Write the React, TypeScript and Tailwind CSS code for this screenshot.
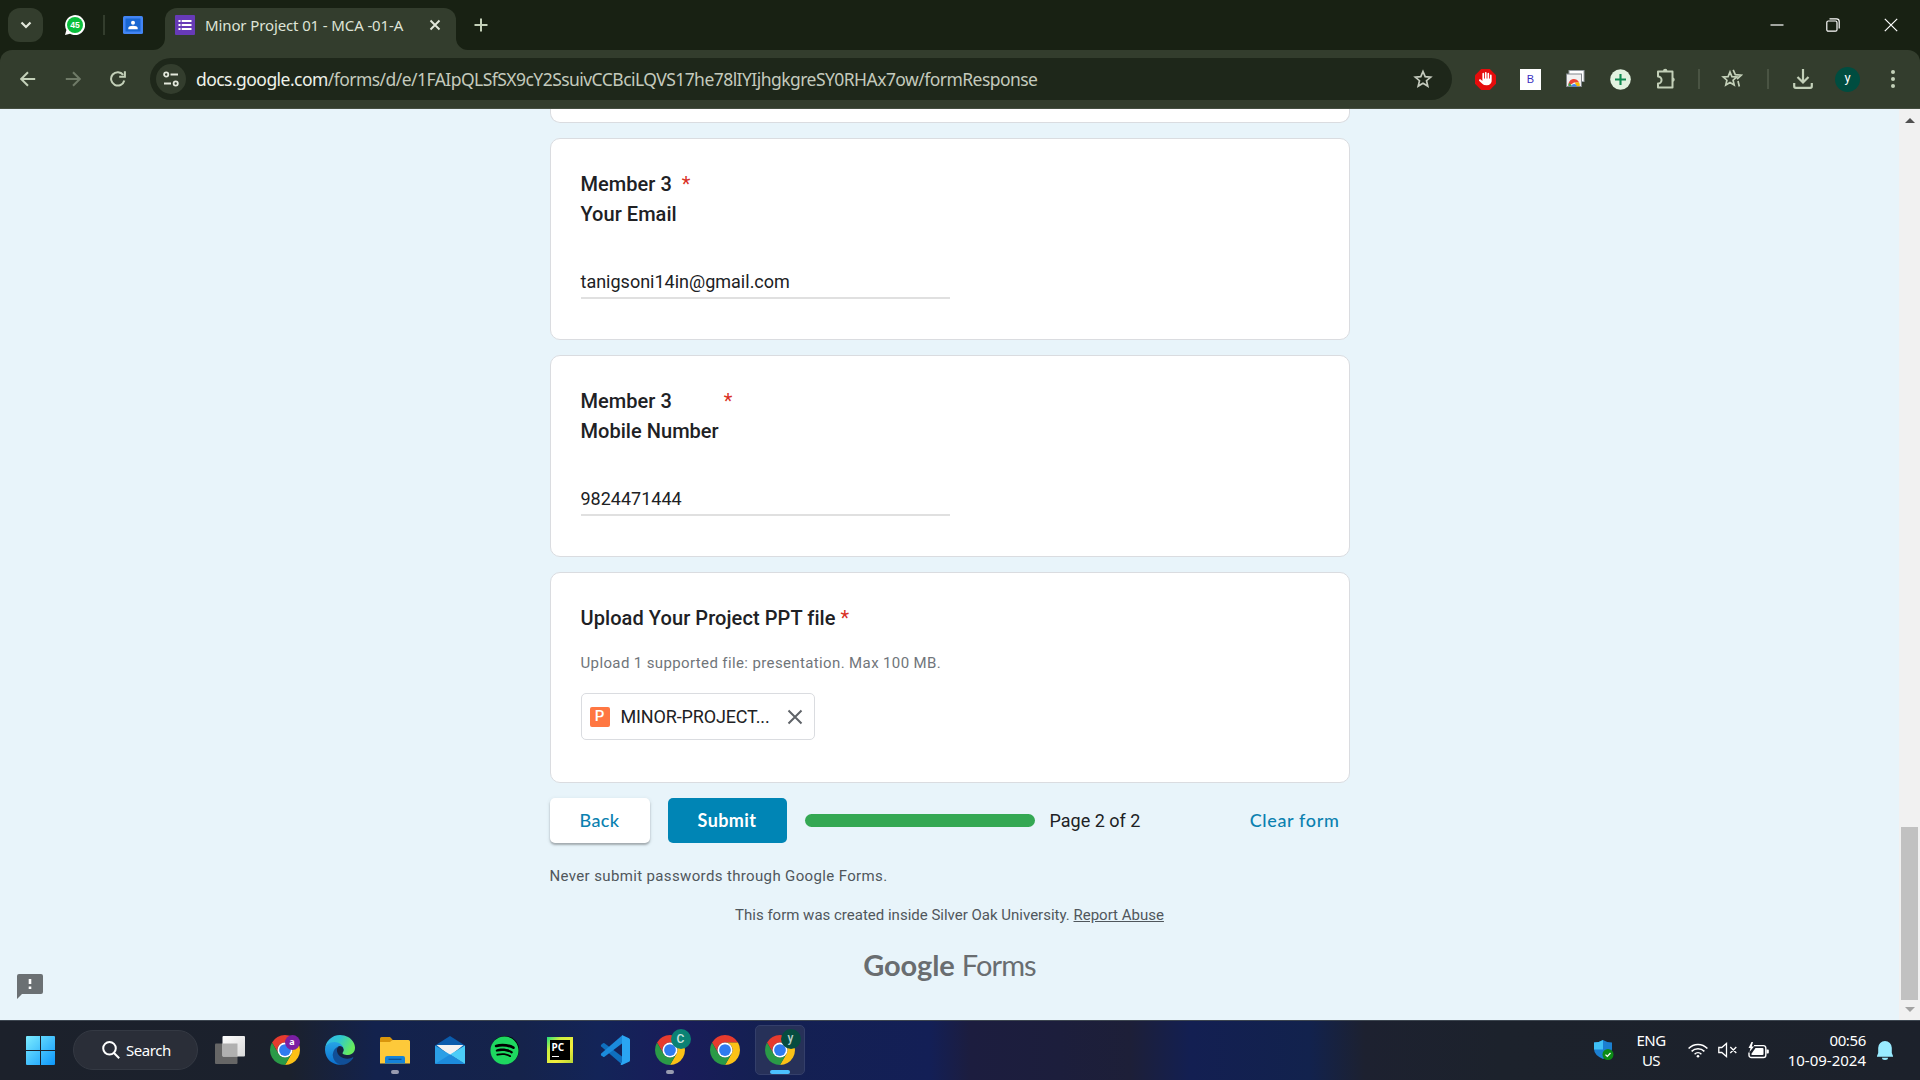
import React from "react";
import { FaSpotify, FaHand } from "react-icons/fa6";

const UI = "font-['Noto_Sans','Open_Sans',sans-serif]";

function ChromeLogo({ badge, badgeClass }: { badge?: string; badgeClass?: string }) {
  return (
    <div className="relative size-[30px]">
      <svg viewBox="0 0 48 48" className="size-[30px]">
        <path fill="#e63b2e" d="M24 12H44.78A24 24 0 0 0 3.22 12L13.61 30A12 12 0 0 1 24 12Z" />
        <path fill="#fbc116" d="M34.39 30L24 48A24 24 0 0 0 44.78 12H24A12 12 0 0 1 34.39 30Z" />
        <path fill="#2a9a47" d="M13.61 30L3.22 12A24 24 0 0 0 24 48L34.39 30A12 12 0 0 1 13.61 30Z" />
        <circle cx="24" cy="24" r="12" fill="#fff" />
        <circle cx="24" cy="24" r="9.4" fill="#2f7bf0" />
      </svg>
      {badge && <span className={badgeClass}>{badge}</span>}
    </div>
  );
}

function TabStrip() {
  return (
    <div className="flex h-[50px] w-full items-center bg-[#182113]">
      <div className="ml-2 flex h-[34px] w-[35px] items-center justify-center rounded-[12px] bg-[#333d2d]">
        <svg viewBox="0 0 12 8" className="h-[8px] w-[12px]" fill="none" stroke="#e3e8dc" strokeWidth="2.2">
          <path d="M1.5 1.5L6 6l4.5-4.5" />
        </svg>
      </div>
      <svg viewBox="0 0 20 20" className="ml-[22px] size-5">
        <path d="M0 20L1.4 15A10 10 0 1 1 5 18.7Z" fill="#fff" />
        <circle cx="10" cy="10" r="8" fill="#0abf3c" />
        <text x="10" y="13.2" fontSize="8.5" fontWeight="700" textAnchor="middle" fill="#fff" fontFamily="Liberation Sans">45</text>
      </svg>
      <div className="ml-[18px] h-5 w-[2px] bg-[#333d2d]" />
      <svg viewBox="0 0 20 18" className="ml-[18px] h-[18px] w-5">
        <rect width="20" height="18" rx="1.5" fill="#4285f4" />
        <rect x="2.5" y="2.5" width="15" height="13" fill="#1967d2" />
        <circle cx="10" cy="6.8" r="2" fill="#fff" />
        <path d="M5.3 13.3v-1.2c0-3.2 9.4-3.2 9.4 0v1.2z" fill="#fff" />
      </svg>
      <svg viewBox="0 0 12 12" className="ml-[10px] size-3 self-end" fill="#333d2d">
        <path d="M12 0A12 12 0 0 1 0 12H12Z" />
      </svg>
      <div className="flex h-[42px] w-[291px] items-center self-end rounded-t-[12px] bg-[#333d2d] pb-2">
        <svg viewBox="0 0 20 20" className="ml-[10px] size-5">
          <rect width="20" height="20" rx="1" fill="#673ab7" />
          <path fill="#fff" d="M3.5 5h2v2h-2zM6.7 5h9.8v2H6.700zM3.500 9h2v2h-2zM6.700 9h9.800v2H6.700zM3.500 13h2v2h-2zM6.700 13h9.800v2H6.700z" />
        </svg>
        <span className="ml-[10px] w-[214px] text-[15px] tracking-[-0.12px] whitespace-nowrap text-[#dfe4d7]">Minor Project 01 - MCA -01-A</span>
        <svg viewBox="0 0 12 12" className="ml-[10px] size-3" stroke="#e3e8dc" strokeWidth="1.9">
          <path d="M1.500 1.500l9 9M10.500 1.500l-9 9" />
        </svg>
      </div>
      <svg viewBox="0 0 12 12" className="size-3 self-end" fill="#333d2d">
        <path d="M0 0A12 12 0 0 0 12 12H0Z" />
      </svg>
      <svg viewBox="0 0 14 14" className="ml-[6px] size-[14px]" stroke="#c3d0b8" strokeWidth="2">
        <path d="M7 .5v13M.5 7h13" />
      </svg>
      <div className="ml-auto flex items-center">
        <svg viewBox="0 0 14 14" className="mr-[42px] size-[14px]" stroke="#fff" strokeWidth="1.200">
          <path d="M.5 7h13" />
        </svg>
        <svg viewBox="0 0 14 14" className="mr-[44px] size-[14px]" stroke="#fff" strokeWidth="1.200" fill="none">
          <rect x=".8" y="3" width="10.200" height="10.200" rx="1.500" />
          <path d="M3.500 .8h7a2.700 2.700 0 0 1 2.700 2.700v7" />
        </svg>
        <svg viewBox="0 0 14 14" className="mr-[22px] size-[14px]" stroke="#fff" strokeWidth="1.200">
          <path d="M.8 .8l12.400 12.400M13.200 .8L.8 13.200" />
        </svg>
      </div>
    </div>
  );
}

function Cell({ w, children }: { w: string; children: React.ReactNode }) {
  return <div className={`flex shrink-0 items-center justify-center ${w}`}>{children}</div>;
}

function Toolbar() {
  return (
    <div className="w-full bg-[#182113]">
      <div className="flex h-[59px] w-full items-center rounded-t-[12px] border-b border-[#454e40] bg-[#333d2d]">
        <div className="flex w-[150px] items-center">
          <svg viewBox="0 0 16 16" className="ml-5 size-4" stroke="#c3d0b8" strokeWidth="2" fill="none">
            <path d="M15.200 8H1.800M8 1.200L1.200 8L8 14.800" />
          </svg>
          <svg viewBox="0 0 16 16" className="ml-[29px] size-4" stroke="#6f7a67" strokeWidth="2" fill="none">
            <path d="M.8 8H14.200M8 1.200L14.800 8L8 14.800" />
          </svg>
          <svg viewBox="0 0 16 16" className="ml-[29px] size-4" fill="none" stroke="#c3d0b8" strokeWidth="2">
            <path d="M14.300 9.500A6.700 6.700 0 1 1 13.200 3.900" />
            <path d="M14.900 .3v5.500H9.200" />
          </svg>
        </div>
        <div className="flex h-[42px] w-[1302px] items-center rounded-full bg-[#1e271a]">
          <div className="ml-[6px] flex size-[30px] items-center justify-center rounded-full bg-[#333d2d]">
            <svg viewBox="0 0 16 16" className="size-4" fill="none" stroke="#e3e8dc" strokeWidth="1.800">
              <circle cx="3.200" cy="3.500" r="2.100" />
              <path d="M7.500 3.500H15M1 12.500h7" />
              <circle cx="12.700" cy="12.500" r="2.100" />
            </svg>
          </div>
          <span className="ml-[10px] text-[17.5px] tracking-[-0.545px] whitespace-nowrap text-[#c4cabd]">
            <span className="text-[#eef2ea]">docs.google.com</span>/forms/d/e/1FAIpQLSfSX9cY2SsuivCCBciLQVS17he78lIYIjhgkgreSY0RHAx7ow/formResponse
          </span>
          <svg viewBox="0 0 20 20" className="mr-[19px] ml-auto size-5" fill="none" stroke="#c4cabd" strokeWidth="1.700">
            <path d="M10 2.500l2.200 5.100 5.500.5-4.200 3.600 1.300 5.400L10 14.200l-4.800 2.900 1.300-5.400L2.300 8.100l5.500-.5z" />
          </svg>
        </div>
        <div className="ml-[11px] flex items-center">
          <Cell w="w-[45px]">
            <svg viewBox="0 0 21 21" className="size-[21px]">
              <path d="M6.200 0h8.600L21 6.200v8.600L14.800 21H6.200L0 14.800V6.200z" fill="#e50c0c" />
              <FaHand x="4" y="3" size={13.5} color="#fff" />
            </svg>
          </Cell>
          <Cell w="w-[45px]">
            <div className="flex size-[21px] items-center justify-center bg-white font-['Liberation_Sans',sans-serif] text-[11px] text-[#3a2fc0]">B</div>
          </Cell>
          <Cell w="w-[44px]">
            <svg viewBox="0 0 20 18" className="h-[18px] w-5">
              <rect x="4" y=".5" width="15" height="11" fill="#fff" stroke="#9aa0a6" />
              <rect x="1.500" y="4" width="15" height="12.500" fill="#f1f1f1" stroke="#80868b" />
              <path d="M3.500 16a5.600 5.600 0 0 1 10.600-3.500H9z" fill="#ea4335" />
              <path d="M3.500 16a5.600 5.600 0 0 1 .8-3.300L7 16z" fill="#34a853" />
              <path d="M14.100 12.500A5.600 5.600 0 0 1 14.700 16H11l-1-3.500z" fill="#fbbc04" />
              <path d="M6.500 16.500a2.600 2.600 0 0 1 5.200 0z" fill="#4285f4" />
            </svg>
          </Cell>
          <Cell w="w-[46px]">
            <svg viewBox="0 0 21 21" className="size-[21px]">
              <circle cx="10.500" cy="10.500" r="10.300" fill="#e2f2e0" />
              <path d="M10.500 5v11M5 10.500h11" stroke="#0e8a50" strokeWidth="2.100" />
            </svg>
          </Cell>
          <Cell w="w-[46px]">
            <svg viewBox="0 0 22 22" className="size-[22px]" fill="none" stroke="#c3d0b8" strokeWidth="2" strokeLinejoin="round">
              <path d="M3 3.500H17.500V19.500H3V15.600A3 3 0 0 0 3 8.500Z" />
              <path d="M8 3a2.200 2.200 0 0 1 4.400 0zM18 9.400a2.200 2.200 0 0 1 0 4.300z" fill="#c3d0b8" stroke="none" />
            </svg>
          </Cell>
          <Cell w="w-[20px]"><div className="h-5 w-[2px] bg-[#4a5443]" /></Cell>
          <Cell w="w-[45px]">
            <svg viewBox="0 0 22 20" className="h-5 w-[22px]" fill="none" stroke="#c3d0b8" strokeWidth="1.700">
              <path d="M9 3l1.900 4.600 4.900.4-3.700 3.200 1.100 4.800L9 13.500 4.800 16l1.100-4.800L2.200 8l4.900-.4z" />
              <path d="M12.200 .8l2.100 4.900 6 .5-4.300 3.800M17 12l1.300 5.500" />
            </svg>
          </Cell>
          <Cell w="w-[27px]"><div className="h-5 w-[2px] bg-[#4a5443]" /></Cell>
          <Cell w="w-[43px]">
            <svg viewBox="0 0 20 20" className="size-5" fill="none" stroke="#c3d0b8" strokeWidth="2.200">
              <path d="M10 0v13M4.500 8L10 13.500 15.500 8M1.200 14v3.300c0 .9.500 1.500 1.500 1.500h14.600c1 0 1.500-.6 1.500-1.500V14" />
            </svg>
          </Cell>
          <Cell w="w-[47px]">
            <div className="flex size-[25px] items-center justify-center rounded-full bg-[#004d40] pb-[3px] font-['Roboto',sans-serif] text-[13px] text-white">y</div>
          </Cell>
          <Cell w="w-[43px]">
            <svg viewBox="0 0 4 18" className="h-[18px] w-1" fill="#c3d0b8">
              <circle cx="2" cy="2" r="2" /><circle cx="2" cy="9" r="2" /><circle cx="2" cy="16" r="2" />
            </svg>
          </Cell>
        </div>
      </div>
    </div>
  );
}

function Question({ lines, value }: { lines: string[]; value: string }) {
  return (
    <section className="h-[202px] w-[800px] rounded-[10px] border border-[#dadce0] bg-white px-[30px] pt-[30px]">
      <div className="flex text-[20px] leading-[30px] text-[#202124]">
        <h2 className="font-medium tracking-[0.04px]">{lines.map((l) => <div key={l}>{l}</div>)}</h2>
        <span className="ml-[5px] text-[#d93025]">*</span>
      </div>
      <div className="mt-[36px] flex h-[34px] w-[369px] items-center border-b-2 border-[#e0e0e0] text-[18px] text-[#202124]">{value}</div>
    </section>
  );
}

function Form() {
  return (
    <main className="flex min-w-0 flex-1 flex-col overflow-hidden bg-[#e8f4fa] font-['Roboto',sans-serif]">
      <div className="ml-[549.5px] w-[800px]">
        <div className="h-[14px] rounded-b-[10px] border border-t-0 border-[#dadce0] bg-white" />
        <div className="mt-[15px] flex flex-col gap-[15px]">
          <Question lines={["Member 3", "Your Email"]} value="tanigsoni14in@gmail.com" />
          <Question lines={["Member 3", "Mobile Number"]} value="9824471444" />
          <section className="h-[211px] rounded-[10px] border border-[#dadce0] bg-white px-[30px] pt-[30px]">
            <div className="flex text-[20px] leading-[30px] text-[#202124]">
              <h2 className="font-medium tracking-[0.08px]">Upload Your Project PPT file</h2>
              <span className="ml-[5px] text-[#d93025]">*</span>
            </div>
            <p className="mt-5 text-[15px] leading-[20px] tracking-[0.375px] text-[#70757a]">Upload 1 supported file: presentation. Max 100 MB.</p>
            <div className="mt-5 flex h-[47px] w-[234px] items-center rounded-[5px] border border-[#dadce0] pl-2">
              <div className="flex size-5 items-center justify-center rounded-[2px] bg-[#ff7742] text-[15px] font-medium text-white">P</div>
              <span className="ml-[11px] w-[154px] text-[18px] tracking-[-0.15px] whitespace-nowrap text-[#202124]">MINOR-PROJECT...</span>
              <svg viewBox="0 0 16 16" className="ml-[12px] size-4" stroke="#5f6368" strokeWidth="2">
                <path d="M1.500 1.500l13 13M14.500 1.500l-13 13" />
              </svg>
            </div>
          </section>
        </div>
        <div className="mt-[15px] flex h-[45px] items-center font-['Lato',sans-serif] text-[18px]">
          <div className="flex h-[45px] w-[100px] items-center justify-center rounded-[5px] bg-white font-medium tracking-[0.4px] text-[#0b81b0] shadow-[0_2px_2px_rgba(60,64,67,0.35),0_1px_4px_rgba(60,64,67,0.12)]">Back</div>
          <div className="ml-[18px] flex h-[45px] w-[119px] items-center justify-center rounded-[5px] bg-[#0085b5] font-bold tracking-[0.4px] text-white">Submit</div>
          <div className="ml-[18px] h-[13px] w-[230px] rounded-full bg-[#34a853]" />
          <span className="ml-[15px] font-['Roboto',sans-serif] text-[18px] text-[#202124]">Page 2 of 2</span>
          <span className="mr-[10px] ml-auto font-medium tracking-[0.65px] text-[#0b81b0]">Clear form</span>
        </div>
        <p className="mt-[23px] text-[15px] leading-[20px] tracking-[0.36px] text-[#50575c]">Never submit passwords through Google Forms.</p>
        <p className="mt-[19px] text-center text-[15px] leading-[20px] text-[#50575c]">
          This form was created inside Silver Oak University. <span className="underline">Report Abuse</span>
        </p>
        <div className="mt-[22px] flex items-baseline justify-center gap-[7px] font-['Lato',sans-serif] text-[29px] leading-[36px] text-[#696d70]">
          <span className="font-bold tracking-[-0.1px]">Google</span>
          <span className="tracking-[-0.9px]">Forms</span>
        </div>
      </div>
      <svg viewBox="0 0 26 25" className="mt-[-9px] ml-[17px] h-[25px] w-[26px]">
        <path d="M2 0h22a2 2 0 0 1 2 2v16a2 2 0 0 1-2 2H5L0 25V2a2 2 0 0 1 2-2z" fill="#6b7073" />
        <path d="M11.700 5h2.600v5h-2.600zM11.700 12.500h2.600v2.600h-2.600z" fill="#fff" />
      </svg>
    </main>
  );
}

function Scrollbar() {
  return (
    <div className="flex w-[21px] flex-col items-center bg-[#f1f1f1]">
      <svg viewBox="0 0 10 5" className="mt-[9px] h-[5px] w-[10px]" fill="#505050"><path d="M0 5L5 0l5 5z" /></svg>
      <div className="mt-[704px] h-[173px] w-[17px] bg-[#c1c1c1]" />
      <svg viewBox="0 0 10 5" className="mt-[7px] h-[5px] w-[10px]" fill="#a3a3a3"><path d="M0 0l5 5 5-5z" /></svg>
    </div>
  );
}

function App55({ children, dot, active }: { children: React.ReactNode; dot?: boolean; active?: boolean }) {
  return (
    <div className="flex h-[60px] w-[55px] items-center justify-center">
      <div className={active ? "relative flex size-[50px] items-center justify-center rounded-[5px] border border-[#343f6a] bg-[#273159]" : "relative flex size-[50px] items-center justify-center"}>
        {children}
        {dot && <span className="absolute bottom-[1px] left-[21px] h-1 w-2 rounded-full bg-[#989bb0]" />}
        {active && <span className="absolute bottom-0 left-[14px] h-1 w-5 rounded-full bg-[#4cc2ff]" />}
      </div>
    </div>
  );
}

function Taskbar() {
  return (
    <div className="flex h-[60px] w-full items-center border-t border-[#3d4650] bg-[linear-gradient(90deg,#1c212b_0px,#1b212d_290px,#13224d_375px,#15234b_520px,#132458_600px,#191c5a_680px,#142052_760px,#131f56_930px,#1c1d3f_970px,#1c1e3c_1060px,#1d1f38_1130px,#131f52_1190px,#12224d_1310px,#1d2130_1365px,#1c222c_1500px,#1c212b_1920px)] pb-px">
      <svg viewBox="0 0 29 29" className="ml-[26px] size-[29px]">
        <defs>
          <linearGradient id="win" x1="0" y1="0" x2="1" y2="1" gradientUnits="objectBoundingBox">
            <stop offset="0" stopColor="#7cecff" /><stop offset="1" stopColor="#0d97fb" />
          </linearGradient>
        </defs>
        <path fill="url(#win)" d="M1 0h13v14H0V1a1 1 0 0 1 1-1zM15 0h13a1 1 0 0 1 1 1v13H15zM0 15h14v14H1a1 1 0 0 1-1-1zM15 15h14v13a1 1 0 0 1-1 1H15z" />
      </svg>
      <div className="ml-[18px] flex h-10 w-[125px] items-center rounded-full border border-[#343943] bg-[#2a2e38]">
        <svg viewBox="0 0 18 18" className="ml-7 size-[18px]" fill="none" stroke="#fff" strokeWidth="2">
          <circle cx="7.500" cy="7.300" r="6.300" /><path d="M12 12l5.200 5.200" />
        </svg>
        <span className="ml-[6px] text-[15px] tracking-[-0.45px] text-white">Search</span>
      </div>
      <div className="ml-1 flex">
        <App55>
          <svg viewBox="0 0 30 28" className="h-7 w-[30px]">
            <defs>
              <linearGradient id="tv" x1="0" y1="0" x2="1" y2="1"><stop offset="0" stopColor="#fff" /><stop offset="1" stopColor="#d8d8d8" /></linearGradient>
            </defs>
            <rect y="7.500" width="22.500" height="20.500" rx="1" fill="#666" />
            <rect x="7.500" width="22.500" height="20.500" rx="1" fill="url(#tv)" />
            <path d="M7.500 7.500h15v13h-15z" fill="#b0b0b0" />
          </svg>
        </App55>
        <App55><ChromeLogo badge="a" badgeClass="absolute top-0 left-[15px] flex size-[15px] items-center justify-center rounded-full bg-[#7b1fa2] pb-px text-[9px] font-bold text-white" /></App55>
        <App55>
          <svg viewBox="0 0 256 256" className="size-[30px]">
            <defs>
              <linearGradient id="e1" x1="0" y1="0" x2="0" y2="1"><stop offset="0" stopColor="#28a8e8" /><stop offset="1" stopColor="#0b6fce" /></linearGradient>
              <linearGradient id="e2" x1="0" y1="0" x2="1" y2=".4"><stop offset="0" stopColor="#35b4f0" /><stop offset=".5" stopColor="#2fc8cf" /><stop offset="1" stopColor="#66eb5e" /></linearGradient>
            </defs>
            <path fill="#114f97" d="M235.680 190.800c-3.400 1.770-6.920 3.340-10.500 4.680a101.700 101.700 0 0 1-35.700 6.350c-47.040 0-88-32.370-88-73.920a31.340 31.340 0 0 1 16.340-27.200c-42.570 1.800-53.500 46.150-53.500 72.120 0 73.440 67.680 80.880 82.260 80.880 7.870 0 19.740-2.300 26.860-4.540l1.300-.44a127.960 127.960 0 0 0 66.600-52.760 4 4 0 0 0-5.360-5.170z" />
            <path fill="url(#e1)" d="M105.730 241.420a79.200 79.200 0 0 1-22.740-21.340 81.080 81.080 0 0 1 29.490-121.590c3.120-1.460 8.450-4.130 15.540-4a32.340 32.340 0 0 1 25.690 13 31.900 31.900 0 0 1 6.360 18.660c0-.2 24.460-79.600-80-79.600-43.900 0-80 41.660-80 78.210a130.150 130.150 0 0 0 12.100 56 128 128 0 0 0 156.380 67.110 75.550 75.550 0 0 1-62.780-6.450z" />
            <path fill="url(#e2)" d="M152.330 148.860c-.81 1.050-3.300 2.500-3.300 5.660 0 2.610 1.700 5.120 4.720 7.230 14.380 10 41.490 8.680 41.560 8.680a59.560 59.560 0 0 0 30.270-8.350 61.380 61.380 0 0 0 30.430-52.880c.26-22.410-8-37.310-11.340-43.910C223.460 23.840 177.720 0 128 0A128 128 0 0 0 0 126.200c.48-36.540 36.800-66.050 80-66.050 3.500 0 23.460.34 42 10.070 16.340 8.580 24.900 18.940 30.850 29.210 6.180 10.670 7.280 24.150 7.280 29.520s-2.740 13.330-7.800 19.910z" />
          </svg>
        </App55>
        <App55 dot>
          <svg viewBox="0 0 30 27" className="h-[27px] w-[30px]">
            <path d="M0 1.500A1.500 1.500 0 0 1 1.500 0h8.500l2.500 2.500V6H0z" fill="#d9960c" />
            <path d="M0 5h10l2.500-2H28.500A1.500 1.500 0 0 1 30 4.500V26.500H0z" fill="#fdc93a" />
            <path d="M5 26.500V21a2 2 0 0 1 2-2h16a2 2 0 0 1 2 2v5.500z" fill="#1583d8" />
            <path d="M8.500 22.300h13" stroke="#0a4f92" strokeWidth="1.200" />
          </svg>
        </App55>
        <App55>
          <svg viewBox="0 0 30 28" className="h-7 w-[30px]">
            <path d="M0 9.500L15 0l15 9.500V14H0z" fill="#0a5cad" />
            <path d="M1.500 9h27L16 19h-2z" fill="#f2f2f2" />
            <path d="M0 9.500l15 9L30 28H1a1 1 0 0 1-1-1z" fill="#2b9fe6" />
            <path d="M30 9.500l-15 9L30 28z" fill="#4bcdf8" />
            <path d="M0 28L15 18.500 30 28z" fill="#1d8bdc" />
          </svg>
        </App55>
        <App55>
          <div className="flex size-[28px] items-center justify-center rounded-full bg-black">
            <FaSpotify className="size-[29px] shrink-0 text-[#1ed760]" />
          </div>
        </App55>
        <App55>
          <div className="flex size-[26px] items-center justify-center bg-[linear-gradient(135deg,#21e07f_0%,#cdf03f_28%,#f4ee3c_65%,#b6d534_100%)]">
            <div className="flex size-5 flex-col bg-black pl-[2px] font-['Noto_Sans',sans-serif] text-[10px] leading-[14px] font-bold text-white">
              PC
              <span className="mt-[2px] h-px w-[7px] bg-white" />
            </div>
          </div>
        </App55>
        <App55>
          <svg viewBox="0 0 30 30" className="size-[30px]">
            <path d="M1.200 9.800L3 8.300q.7-.5 1.500 0L22 21.500V29.500L1.200 11.500q-.8-.9 0-1.700z" fill="#0f6fbe" />
            <path d="M1.200 20.200L3 21.700q.7.500 1.500 0L22 8.500V.5L1.200 18.500q-.8.900 0 1.700z" fill="#1b8bdc" />
            <path d="M22 0l7 3.300q1 .5 1 1.500V25.200q0 1-1 1.500L22 30q-1 .2-1.500-.8L22 27z" fill="#2aa5f2" />
          </svg>
        </App55>
        <App55 dot><ChromeLogo badge="C" badgeClass="absolute -top-[6px] left-[16px] flex size-5 items-center justify-center rounded-full bg-[#0b8174] font-['Roboto',sans-serif] text-[12px] font-medium text-[#c9e4e0]" /></App55>
        <App55><ChromeLogo /></App55>
        <App55 active><ChromeLogo badge="y" badgeClass="absolute -top-[6px] left-[16px] flex size-5 items-center justify-center rounded-full bg-[#064c40] pb-[2px] font-['Roboto',sans-serif] text-[12px] font-medium text-[#b9d2cd]" /></App55>
      </div>
      <div className="ml-auto flex items-center text-[15px] leading-5 text-white">
        <svg viewBox="0 0 20 20" className="size-5">
          <path d="M9 0q4 2.600 9 2.600V9q0 6-9 10Q0 15 0 9V2.600Q5 2.600 9 0z" fill="#1b7fd0" />
          <path d="M9 0v9.500H0V2.600Q5 2.600 9 0z" fill="#3fc0f5" />
          <circle cx="14" cy="14.500" r="5.500" fill="#0c8a16" />
          <path d="M11.500 14.600l1.800 1.800 3.200-3.400" stroke="#fff" strokeWidth="1.300" fill="none" />
        </svg>
        <div className="ml-[18px] flex w-[38px] flex-col items-center tracking-[-0.5px]"><span>ENG</span><span>US</span></div>
        <svg viewBox="0 0 20 16" className="ml-[18px] h-4 w-5" fill="none" stroke="#fff" strokeWidth="1.500">
          <path d="M.6 6.500a13 13 0 0 1 18.800 0M3.600 9.400a9 9 0 0 1 12.800 0M6.600 12.200a4.900 4.900 0 0 1 6.800 0" />
          <circle cx="10" cy="14.200" r="1.300" fill="#fff" stroke="none" />
        </svg>
        <svg viewBox="0 0 20 16" className="ml-[10px] h-4 w-5" fill="none" stroke="#fff" strokeWidth="1.300">
          <path d="M.8 5.500h3L8.500 1.500v13l-4.700-4h-3zM12.300 5l6 6M18.300 5l-6 6" />
        </svg>
        <svg viewBox="0 0 21 17" className="ml-[10px] h-[17px] w-[21px]">
          <path d="M6 3.600H15.500a2.300 2.300 0 0 1 2.300 2.300v7.300a2.300 2.300 0 0 1-2.300 2.300H3.300A2.300 2.300 0 0 1 1 13.200V10.500" fill="none" stroke="#fff" strokeWidth="1.400" />
          <path d="M7.500 6H14.500a1 1 0 0 1 1 1v5a1 1 0 0 1-1 1H4.300a1 1 0 0 1-1-1z" fill="#fff" />
          <path d="M18.500 7.500h1.500a.8.8 0 0 1 .8.800v2.500a.8.8 0 0 1-.8.800h-1.500zM3.500 0L.5 6h2L1.500 10 6 4.500H3.800L5 0z" fill="#fff" />
        </svg>
        <div className="ml-[17px] flex w-[80px] flex-col items-end whitespace-nowrap"><span className="tracking-[-0.35px]">00:56</span><span>10-09-2024</span></div>
        <svg viewBox="0 0 16 19" className="mr-[27px] ml-[11px] h-[19px] w-4" fill="#99ebff">
          <path d="M8 0a6.800 6.800 0 0 1 6.800 6.800V12L16 15v.8H0V15l1.200-3V6.800A6.800 6.800 0 0 1 8 0zM5 16.800h6a3 2.200 0 0 1-6 0z" />
        </svg>
      </div>
    </div>
  );
}

export default function App() {
  return (
    <div className={`flex h-[1080px] w-[1920px] flex-col overflow-hidden ${UI}`}>
      <TabStrip />
      <Toolbar />
      <div className="flex h-[911px]">
        <Form />
        <Scrollbar />
      </div>
      <Taskbar />
    </div>
  );
}
